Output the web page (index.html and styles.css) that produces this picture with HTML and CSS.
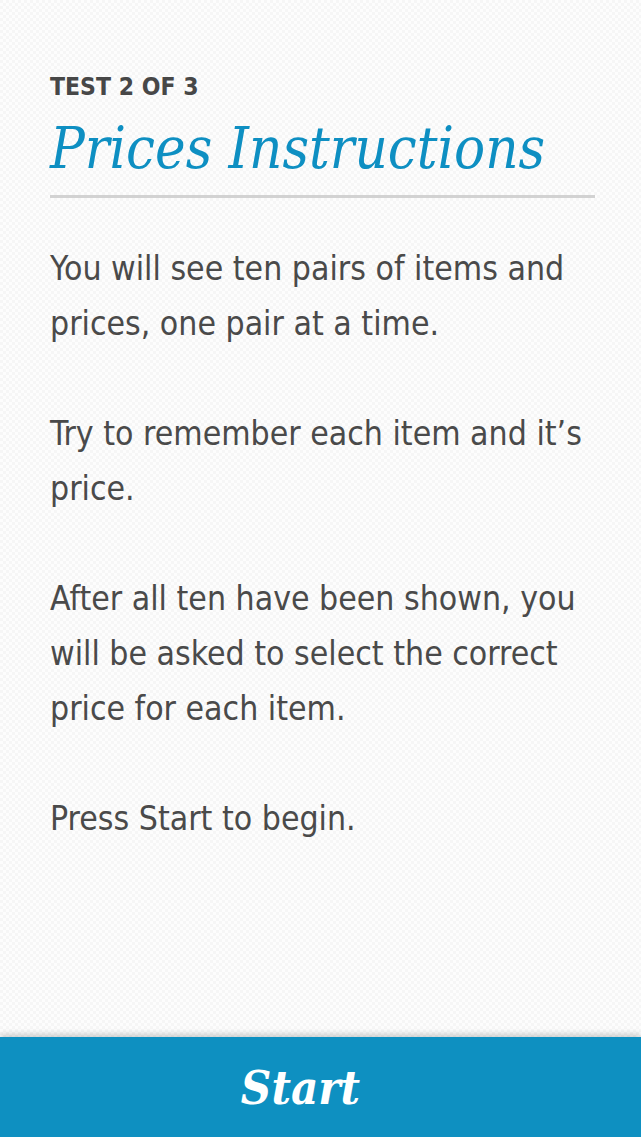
FILE: index.html
```html
<!DOCTYPE html>
<html lang="en">
<head>
<meta charset="utf-8">
<title>Prices Instructions</title>
<link rel="stylesheet" href="styles.css">
</head>
<body>
<div class="screen">
  <main class="content">
    <div class="eyebrow">TEST 2 OF 3</div>
    <h1 class="title">Prices Instructions</h1>
    <hr class="rule">
    <div class="body">
      <p>You will see ten pairs of items and prices, one pair at a time.</p>
      <p>Try to remember each item and it’s price.</p>
      <p>After all ten have been shown, you will be asked to select the correct price for each item.</p>
      <p>Press Start to begin.</p>
    </div>
  </main>
  <footer class="footer">
    <button class="start">Start</button>
  </footer>
</div>
</body>
</html>
```
FILE: styles.css
```css
html, body {
  margin: 0;
  padding: 0;
  height: 100%;
}
body {
  background-color: #f6f6f6;
  background-image:
    linear-gradient(45deg, rgba(255,255,255,0.8) 25%, transparent 25%, transparent 75%, rgba(255,255,255,0.8) 75%),
    linear-gradient(45deg, rgba(255,255,255,0.8) 25%, transparent 25%, transparent 75%, rgba(255,255,255,0.8) 75%);
  background-size: 6px 6px;
  background-position: 0 0, 3px 3px;
}
.screen {
  height: 1137px;
  display: flex;
  flex-direction: column;
}
.content {
  flex: 1;
  padding: 70px 46px 0 50px;
}
.eyebrow {
  font-family: "DejaVu Sans Condensed", "DejaVu Sans", sans-serif;
  font-stretch: condensed;
  font-weight: bold;
  font-size: 24.5px;
  line-height: 34px;
  color: #474747;
}
.title {
  margin: 10px 0 0;
  font-family: "DejaVu Serif", Georgia, serif;
  font-stretch: condensed;
  font-style: italic;
  font-weight: normal;
  font-size: 57.5px;
  line-height: 70px;
  color: #0e8fc2;
}
.rule {
  margin: 11px 0 0;
  border: 0;
  height: 3px;
  background: #d2d2d2;
}
.body {
  margin-top: 43px;
  font-family: "DejaVu Sans Condensed", "DejaVu Sans", sans-serif;
  font-stretch: condensed;
  font-size: 33.5px;
  line-height: 55px;
  color: #4a4a4a;
}
.body p {
  margin: 0 0 55px;
}
.footer {
  height: 100px;
  background: #0e90c1;
  box-shadow: 0 -3px 6px rgba(0,0,0,0.18);
  display: flex;
  align-items: center;
  justify-content: center;
}
.start {
  border: 0;
  background: transparent;
  margin-right: 40px;
  font-family: "DejaVu Serif", Georgia, serif;
  font-stretch: condensed;
  font-style: italic;
  font-weight: bold;
  font-size: 47px;
  color: #ffffff;
  padding: 0;
}
```
